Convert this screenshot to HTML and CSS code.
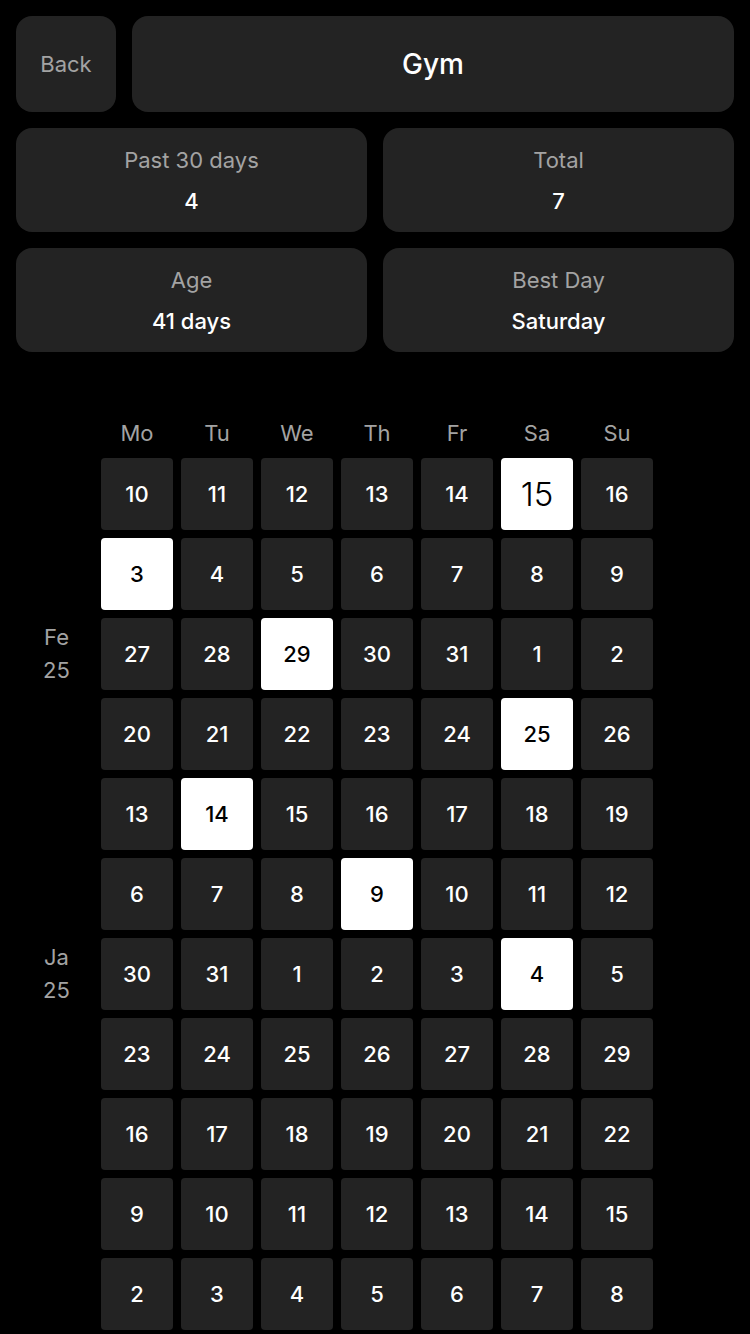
FILE: index.html
```html
<!DOCTYPE html>
<html lang="en">
<head>
<meta charset="utf-8">
<title>Gym</title>
<link rel="stylesheet" href="styles.css">
</head>
<body>
<div class="page">
  <div class="topbar">
    <button class="btn back">Back</button>
    <div class="btn title">Gym</div>
  </div>
  <div class="stats">
    <div class="card"><div class="label">Past 30 days</div><div class="value">4</div></div>
    <div class="card"><div class="label">Total</div><div class="value">7</div></div>
    <div class="card"><div class="label">Age</div><div class="value">41 days</div></div>
    <div class="card"><div class="label">Best Day</div><div class="value">Saturday</div></div>
  </div>
  <div class="calendar">
    <div class="month"></div>
    <div class="dow">Mo</div><div class="dow">Tu</div><div class="dow">We</div><div class="dow">Th</div><div class="dow">Fr</div><div class="dow">Sa</div><div class="dow">Su</div>

    <div class="month"></div>
    <div class="day">10</div><div class="day">11</div><div class="day">12</div><div class="day">13</div><div class="day">14</div><div class="day on today">15</div><div class="day">16</div>

    <div class="month"></div>
    <div class="day on">3</div><div class="day">4</div><div class="day">5</div><div class="day">6</div><div class="day">7</div><div class="day">8</div><div class="day">9</div>

    <div class="month">Fe<br>25</div>
    <div class="day">27</div><div class="day">28</div><div class="day on">29</div><div class="day">30</div><div class="day">31</div><div class="day">1</div><div class="day">2</div>

    <div class="month"></div>
    <div class="day">20</div><div class="day">21</div><div class="day">22</div><div class="day">23</div><div class="day">24</div><div class="day on">25</div><div class="day">26</div>

    <div class="month"></div>
    <div class="day">13</div><div class="day on">14</div><div class="day">15</div><div class="day">16</div><div class="day">17</div><div class="day">18</div><div class="day">19</div>

    <div class="month"></div>
    <div class="day">6</div><div class="day">7</div><div class="day">8</div><div class="day on">9</div><div class="day">10</div><div class="day">11</div><div class="day">12</div>

    <div class="month">Ja<br>25</div>
    <div class="day">30</div><div class="day">31</div><div class="day">1</div><div class="day">2</div><div class="day">3</div><div class="day on">4</div><div class="day">5</div>

    <div class="month"></div>
    <div class="day">23</div><div class="day">24</div><div class="day">25</div><div class="day">26</div><div class="day">27</div><div class="day">28</div><div class="day">29</div>

    <div class="month"></div>
    <div class="day">16</div><div class="day">17</div><div class="day">18</div><div class="day">19</div><div class="day">20</div><div class="day">21</div><div class="day">22</div>

    <div class="month"></div>
    <div class="day">9</div><div class="day">10</div><div class="day">11</div><div class="day">12</div><div class="day">13</div><div class="day">14</div><div class="day">15</div>

    <div class="month"></div>
    <div class="day">2</div><div class="day">3</div><div class="day">4</div><div class="day">5</div><div class="day">6</div><div class="day">7</div><div class="day">8</div>
  </div>
</div>
</body>
</html>
```

FILE: styles.css
```css
* { box-sizing: border-box; }
html, body {
  margin: 0;
  background: #000;
}
body {
  font-family: Inter, "Noto Sans", sans-serif;
  color: #fff;
}
.page {
  padding: 16px;
}
.topbar {
  display: flex;
  gap: 16px;
  height: 96px;
}
.btn {
  background: #232323;
  border: none;
  border-radius: 16px;
  display: flex;
  align-items: center;
  justify-content: center;
  font-family: inherit;
}
.back {
  width: 100px;
  color: #a3a3a3;
  font-size: 22px;
  font-weight: 400;
  padding: 0;
}
.title {
  flex: 1;
  color: #fff;
  font-size: 28px;
  font-weight: 500;
}
.stats {
  display: grid;
  grid-template-columns: 1fr 1fr;
  gap: 16px;
  margin-top: 16px;
}
.card {
  background: #232323;
  border-radius: 16px;
  height: 104px;
  padding-top: 16px;
  text-align: center;
}
.label {
  color: #a3a3a3;
  font-size: 22px;
  line-height: 32px;
}
.value {
  margin-top: 9px;
  color: #fff;
  font-size: 22px;
  font-weight: 500;
  line-height: 32px;
}
.calendar {
  display: grid;
  grid-template-columns: 73px repeat(7, 72px);
  grid-auto-rows: 72px;
  grid-template-rows: 34px;
  gap: 8px;
  margin-top: 64px;
  padding-left: 4px;
}
.dow {
  color: #a3a3a3;
  font-size: 22px;
  display: flex;
  align-items: center;
  justify-content: center;
}
.month {
  color: #a3a3a3;
  font-size: 22px;
  line-height: 33px;
  display: flex;
  align-items: center;
  justify-content: center;
  text-align: center;
}
.day {
  background: #232323;
  border-radius: 4px;
  display: flex;
  align-items: center;
  justify-content: center;
  font-size: 22px;
  font-weight: 500;
  color: #fff;
}
.day.on {
  background: #fff;
  color: #000;
}
.day.today {
  font-size: 33px;
  font-weight: 300;
}
```
